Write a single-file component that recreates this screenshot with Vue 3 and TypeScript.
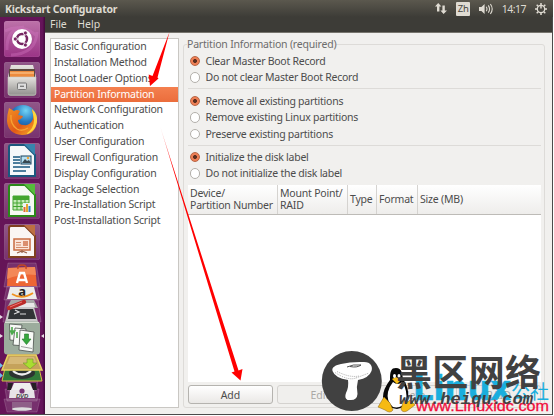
<script setup lang="ts">
interface RadioOption {
  label: string
  checked: boolean
}

const sections: string[] = [
  'Basic Configuration',
  'Installation Method',
  'Boot Loader Options',
  'Partition Information',
  'Network Configuration',
  'Authentication',
  'User Configuration',
  'Firewall Configuration',
  'Display Configuration',
  'Package Selection',
  'Pre-Installation Script',
  'Post-Installation Script',
]
const current = 'Partition Information'

const groups: RadioOption[][] = [
  [
    { label: 'Clear Master Boot Record', checked: true },
    { label: 'Do not clear Master Boot Record', checked: false },
  ],
  [
    { label: 'Remove all existing partitions', checked: true },
    { label: 'Remove existing Linux partitions', checked: false },
    { label: 'Preserve existing partitions', checked: false },
  ],
  [
    { label: 'Initialize the disk label', checked: true },
    { label: 'Do not initialize the disk label', checked: false },
  ],
]

const columns: string[] = ['Device/\nPartition Number', 'Mount Point/\nRAID', 'Type', 'Format', 'Size (MB)']
const actions: string[] = ['Add', 'Edit', 'Delete', 'RAID']
</script>

<template>
  <div class="screen">
    <header class="panel">
      <span class="title">Kickstart Configurator</span>
      <div class="tray">
        <svg class="net" width="12" height="12" viewBox="0 0 12 12">
          <path d="M3.2 0 6.4 3.6H4.4V8.6H2V3.6H0ZM8.6 11 5.4 7.4H7.4V2.4H9.8V7.4H12Z" fill="#dfdbd2" />
        </svg>
        <span class="lang">Zh</span>
        <svg class="vol" width="15" height="12" viewBox="0 0 15 12">
          <path d="M0 4H2.4L5.6 1V11L2.4 8H0Z" fill="#dfdbd2" />
          <path d="M7.2 3.8Q8.8 6 7.2 8.2M9.3 2.4Q11.8 6 9.3 9.6M11.4 1Q15 6 11.4 11" fill="none" stroke="#dfdbd2" stroke-width="1.1" />
        </svg>
        <span class="clock">14:17</span>
        <svg class="gear" width="12" height="12" viewBox="0 0 12 12">
          <circle cx="6" cy="6" r="3.7" fill="none" stroke="#dfdbd2" stroke-width="1.3" />
          <path d="M6 0V5.6M6 10V12M0 6H2M10 6H12M1.7 1.7 3.2 3.2M8.8 8.8 10.3 10.3M1.7 10.3 3.2 8.8M8.8 3.2 10.3 1.7" stroke="#dfdbd2" stroke-width="1.5" />
        </svg>
      </div>
    </header>

    <div class="desktop">
      <nav class="launcher">
        <div class="tile dash">
          <svg width="36" height="36" viewBox="0 0 36 36">
            <path d="M1 10Q17 2 32 14M3 29Q2 8 20 6M7 34Q32 33 33 11" fill="none" stroke="#d77cc6" stroke-width="3" opacity=".35" />
            <circle cx="18" cy="18" r="10" fill="#fff" />
            <circle cx="18" cy="18" r="5" fill="none" stroke="#762662" stroke-width="2.5" />
            <path d="M18 18 10 18M18 18 22 11M18 18 22 25" stroke="#fff" stroke-width="1.2" />
            <g fill="#762662" stroke="#fff" stroke-width=".7"><circle cx="11.3" cy="18" r="2" /><circle cx="21.4" cy="12" r="2" /><circle cx="21.4" cy="24" r="2" /></g>
          </svg>
        </div>
        <div class="tile">
          <svg width="36" height="36" viewBox="0 0 36 36">
            <defs>
              <linearGradient id="cab" x1="0" y1="0" x2="0" y2="1"><stop offset="0" stop-color="#e5e3df" /><stop offset="1" stop-color="#92918e" /></linearGradient>
            </defs>
            <path d="M7 3H29L32 14V31Q32 34 29 34H7Q4 34 4 31V14Z" fill="url(#cab)" />
            <path d="M5 7H31V16H5Z" fill="#5d4b40" />
            <path d="M6 9H30V15H6Z" fill="#ed8b3d" />
            <path d="M6 11H30" stroke="#ffd09b" />
            <path d="M4 15H32V31Q32 33 30 33H6Q4 33 4 31Z" fill="url(#cab)" stroke="#c9c7c3" stroke-width=".6" />
            <rect x="13.5" y="21" width="9" height="6.5" rx="1" fill="#ddd" stroke="#777" />
            <path d="M16 24.3H20" stroke="#777" stroke-width="1.3" />
          </svg>
        </div>
        <div class="tile">
          <svg width="36" height="36" viewBox="0 0 36 36">
            <defs>
              <radialGradient id="globe" cx=".6" cy=".2" r=".8"><stop offset="0" stop-color="#72d4f5" /><stop offset=".5" stop-color="#2477c0" /><stop offset="1" stop-color="#173d7d" /></radialGradient>
              <linearGradient id="fox" x1="0" y1="0" x2="1" y2="1"><stop offset="0" stop-color="#f39323" /><stop offset=".55" stop-color="#e15a17" /><stop offset="1" stop-color="#f9b629" /></linearGradient>
            </defs>
            <circle cx="19" cy="17" r="14" fill="url(#globe)" />
            <path d="M5 6 10 9Q13 7 16 9L14 13 19 14Q18 17 14 18Q14 23 20 23Q26 24 29 17Q30 11 27 7Q34 12 33 20Q31 33 18 33Q4 32 3 19Q3 13 5 6Z" fill="url(#fox)" />
            <path d="M28 7Q34 12 33 20Q31 30 22 32Q30 27 30 18Z" fill="#ffd43c" />
            <path d="M7 13Q6 22 13 27Q18 30 24 26" fill="none" stroke="#f7a132" stroke-width="1.4" />
          </svg>
        </div>
        <div class="tile">
          <svg width="36" height="36" viewBox="0 0 36 36">
            <path d="M7 2H21L31 12V33H5V4Q5 2 7 2Z" fill="#f5f8fa" stroke="#1b577e" stroke-width="2" />
            <path d="M20 1H31V12Z" fill="#3784ad" />
            <path d="M9 14H16M9 17H16M9 20H16M9 24H26M9 28H22" stroke="#16567f" stroke-width="1.6" />
            <rect x="17" y="13" width="10" height="8" fill="#b6e0f2" stroke="#17415d" />
            <path d="M18 20 21 16 23 18 25 17 27 20Z" fill="#384850" /><circle cx="24" cy="15" r="1.2" fill="#f2a438" />
          </svg>
        </div>
        <div class="tile">
          <svg width="36" height="36" viewBox="0 0 36 36">
            <path d="M7 2H21L31 12V33H5V4Q5 2 7 2Z" fill="#f6faf3" stroke="#2a8919" stroke-width="2" />
            <path d="M20 1H31V12Z" fill="#55bd3b" />
            <path d="M9 13H25V27H9Z" fill="#c4eab6" /><path d="M9 13H25V16H9Z" fill="#45a62c" />
            <path d="M9 13H25V27H9ZM9 16.5H25M9 20H25M9 23.5H25M13 13V27M17 13V27M21 13V27" fill="none" stroke="#43a530" />
            <path d="M19 20H27V29H19Z" fill="#edf5f5" /><path d="M20.5 29V24" stroke="#e36a34" stroke-width="2" /><path d="M23 29V21" stroke="#e4a72d" stroke-width="2" /><path d="M25.5 29V23" stroke="#3181c1" stroke-width="2" />
          </svg>
        </div>
        <div class="tile">
          <svg width="36" height="36" viewBox="0 0 36 36">
            <path d="M7 2H21L31 12V33H5V4Q5 2 7 2Z" fill="#faf6f3" stroke="#80401f" stroke-width="2" />
            <path d="M20 1H31V12Z" fill="#bd7042" />
            <rect x="10" y="15" width="16" height="11" fill="#fbe5d9" stroke="#c96c42" stroke-width="1.5" />
            <path d="M12 18.5H17M12 21H17M12 23.5H24" stroke="#d38a69" /><path d="M19 17H24V22H19Z" fill="#db8f6e" />
            <path d="M18 26V29M13 29 18 27 23 29" fill="none" stroke="#9c6449" stroke-width="1.3" />
          </svg>
        </div>
        <svg class="stack" width="44" height="152" viewBox="0 262 44 152">
          <g fill="#fff" fill-opacity=".12" stroke="#fff" stroke-opacity=".22" stroke-width=".7">
            <path d="M8 263H36L40 287H4Z" /><path d="M7 286H37L40 300H4Z" /><path d="M6 299H38L41 322H3Z" />
            <path d="M5 375H39L36 391H8Z" /><path d="M5 389H39L37 401H7Z" /><path d="M4 399H40L37 412H7Z" />
          </g>
          <path d="M8 268 35 267 37 286H7Z" fill="#ed6634" /><path d="M8 268 35 267 36 275Q22 273 7 279Z" fill="#f38858" />
          <path d="M18 269Q17 265 22 265T26 269" fill="none" stroke="#c44822" stroke-width="1.5" />
          <path d="M17 283 20 273H24L27 283M18 280H26" fill="none" stroke="#fff" stroke-width="2.4" />
          <path d="M10 287H34L37 299H7Z" fill="#ececea" />
          <text x="22" y="296" class="amazon">a</text>
          <path d="M12 294Q22 300 33 293" fill="none" stroke="#f1921e" stroke-width="1.8" />
          <path d="M11 300H34L38 308H7Z" fill="#a8a8a8" /><path d="M20 303H34L35 307H18Z" fill="#e8e8e8" />
          <path d="M9 307H34L38 322H5Z" fill="#c8c8c8" /><path d="M10 309H33L36 319H8Z" fill="#313436" />
          <path d="M15 310 19 312 14 314M20 314H26" fill="none" stroke="#ddd" stroke-width="1.2" />
          <path d="M9 308 24 302" stroke="#bb2c29" stroke-width="4.4" stroke-linecap="round" /><path d="M10 307 22 302" stroke="#ef7770" />
          <rect x="4" y="321.5" width="36" height="33" rx="3" fill="#9cac9d" />
          <path d="M5 322.5H39" stroke="#d7ded3" />
          <g fill="#f7f9f6" stroke="#4b514d" stroke-width=".8">
            <path d="M9.5 324 22 325 20 341 10 340Z" /><path d="M15 328 26 329 25 346 13 345Z" /><path d="M20 330 34 332 33 352 19 350Z" />
          </g>
          <path d="M12 327V331M10.500 331H14.500L12 334ZM17 332V338" stroke="#4caa4d" stroke-width="1.6" fill="#4caa4d" />
          <path d="M24.500 334H28.500V339H31L26.500 344.500 22 339H24.500Z" fill="#35a83c" stroke="#24772b" stroke-width=".6" />
          <path d="M21 346.500 32 348.500" stroke="#9ca19e" />
          <path d="M5 368H39L42 381H2Z" fill="#317a39" stroke="#d9bd44" />
          <ellipse cx="22" cy="373" rx="13" ry="6" fill="#2c3431" /><path d="M13 371Q22 378 31 371" fill="none" stroke="#eee" stroke-width="2.2" />
          <path d="M8 355H36L42 370H2Z" fill="#c5a25b" stroke="#e9d35f" stroke-width="1.5" />
          <path d="M10 357H34L37 364H7Z" fill="#d6b877" />
          <path d="M27 359H33V363H37L30 369 23 363H27Z" fill="#a9dd31" stroke="#72932a" stroke-width=".6" />
          <path d="M8 383H13L11 390H7ZM31 383H36L37 390H33Z" fill="#251f25" /><path d="M14 383H30L33 390H11Z" fill="#eee" />
          <path d="M10 390H34L35 398H9Z" fill="#e7e3e7" /><circle cx="22" cy="391" r="2.6" fill="#783273" />
          <text x="22" y="397.5" class="dvd">DVD</text>
          <path d="M12 402H32V410H12Z" fill="#a58ea1" opacity=".5" /><ellipse cx="22" cy="409" rx="10" ry="1.8" fill="#ddd" />
          <path d="M0 315 3 317 0 319ZM0 334 3 336 0 338ZM44 334 41 336 44 338Z" fill="#e7dce5" />
          <path d="M0 363 3 365.5 0 368ZM0 373 3 375.5 0 378Z" fill="#6fc0e8" />
        </svg>
      </nav>

      <main class="window">
        <div class="menubar"><span>File</span><span>Help</span></div>
        <div class="body">
          <ul class="sections">
            <li v-for="name in sections" :key="name" :class="{ selected: name === current }">{{ name }}</li>
          </ul>
          <fieldset class="frame">
            <legend>Partition Information (required)</legend>
            <div v-for="(group, i) in groups" :key="i" class="group">
              <div v-for="option in group" :key="option.label" class="option">
                <i class="radio" :class="{ on: option.checked }"></i><span>{{ option.label }}</span>
              </div>
            </div>
            <div class="table">
              <div class="thead">
                <div v-for="column in columns" :key="column" class="th">{{ column }}</div>
              </div>
            </div>
            <div class="actions">
              <button v-for="(action, i) in actions" :key="action" :disabled="i > 0">{{ action }}</button>
            </div>
          </fieldset>
        </div>
      </main>
    </div>

    <svg class="overlay" width="554" height="416" viewBox="0 0 554 416">
      <defs>
        <linearGradient id="tail" gradientUnits="userSpaceOnUse" x1="160" y1="126" x2="175" y2="165"><stop offset="0" stop-color="#f00" stop-opacity=".15" /><stop offset="1" stop-color="#f00" /></linearGradient>
      </defs>
      <path d="M169.5 32 157.5 77.5 158.5 78.5 150 86 148.7 74.500 152.500 76Z" fill="#fe0000" />
      <path d="M160 126 238.500 370.500 242.500 369 240.500 380.500 231.500 372.500 234.500 371.500Z" fill="url(#tail)" />

      <g class="mark">
        <text x="413" y="399.500" class="linux" textLength="98" lengthAdjust="spacingAndGlyphs">Linux</text>
        <text x="511" y="399" class="club" textLength="38">公社</text>
        <text x="416" y="411" class="site" textLength="133" lengthAdjust="spacingAndGlyphs">www.Linuxidc.com</text>
      </g>
      <g>
        <path d="M390 380C390 371 391 368 396 368C402 368 402 373 403 379Q409 387 408 397Q407 407 397 409Q385 408 383 397Q383 389 390 380Z" fill="#080808" />
        <path d="M393 382Q398 386 402 382Q408 391 406 401Q402 409 393 407Q386 401 388 392Q389 387 393 382Z" fill="#fff" />
        <path d="M392 379 396 377 401 380 397 384Z" fill="#f7bd13" />
        <ellipse cx="394.5" cy="376" rx="1.5" ry="2" fill="#fff" /><ellipse cx="399" cy="376" rx="1.5" ry="2" fill="#fff" />
        <path d="M384 397 390 403 393 410Q390 414 385 410L378 407 381 402Z" fill="#f6ba13" stroke="#866014" stroke-width=".5" />
        <path d="M404 399Q407 404 410 400L415 405 407 411Q402 413 401 409Z" fill="#f6ba13" stroke="#866014" stroke-width=".5" />
      </g>
      <circle cx="351.800" cy="381" r="30" fill="#414141" />
      <path d="M332.500 371C331.500 367 336 365 341 364Q351 361.500 364 362C371 362 373 367 371.500 371Q369 378 358 380Q356 387 357.500 394Q357 400 351 400H347.500Q344 398 346 393Q349 387 348 380Q335 378 332.500 371Z" fill="#fff" />
      <path d="M347 367Q353 364 361 365Q357 368 350 366.500" fill="none" stroke="#414141" stroke-width=".9" />
      <path d="M335 372.500Q348 381 356 378M337 371.500Q350 378 359 376M356 378 369 373" fill="none" stroke="#777" stroke-width=".6" stroke-dasharray="1 1" />
      <text x="396" y="386" class="heiqu" textLength="145">黑区网络</text>
      <text x="399" y="404" class="url" textLength="134" lengthAdjust="spacingAndGlyphs">www.heiqu.com</text>
    </svg>
  </div>
</template>

<style>
body {
  background: #fff;
}
</style>

<style scoped>
* {
  box-sizing: border-box;
}
.screen {
  position: relative;
  width: 554px;
  height: 416px;
  padding: 0 1px 1px 0;
  overflow: hidden;
  font: 10.5px/16px 'Noto Sans', 'Open Sans', sans-serif;
  letter-spacing: -0.2px;
  color: #4c4c4c;
}
.panel {
  height: 17px;
  display: flex;
  align-items: center;
  justify-content: space-between;
  padding: 0 6px 0 5px;
  background: linear-gradient(#5b584e, #3d3c37);
  color: #dfdbd2;
}
.title {
  font-weight: 700;
  letter-spacing: -0.24px;
}
.tray {
  display: flex;
  align-items: center;
}
.lang {
  width: 14px;
  height: 14px;
  margin-left: 9px;
  border-radius: 1px;
  background: #dfdbd2;
  color: #45443e;
  font-size: 9.5px;
  line-height: 14px;
  text-align: center;
}
.vol {
  margin-left: 8.5px;
}
.clock {
  margin: 0 9px 0 8px;
  letter-spacing: -0.5px;
}
.desktop {
  display: flex;
  height: 398px;
  border-right: 1px solid #4b4b4b;
  border-bottom: 1px solid #4b4b4b;
}
.launcher {
  width: 45px;
  flex: none;
  display: flex;
  flex-direction: column;
  align-items: center;
  gap: 4.6px;
  padding: 4px 1px 0 0;
  background: linear-gradient(90deg, #651457, #65145a 94%, #42083a);
}
.tile {
  width: 36px;
  height: 36px;
  flex: none;
  border-radius: 3px;
  background: linear-gradient(#ffffff48, #ffffff20);
  box-shadow: inset 0 0 1px #ffffff70;
}
.tile svg {
  display: block;
}
.dash {
  background: linear-gradient(#bc72a9, #9b3486);
}
.stack {
  flex: none;
  margin-top: -3px;
}
.amazon {
  font: 700 13px 'Noto Sans', sans-serif;
  text-anchor: middle;
  fill: #242424;
}
.dvd {
  font: italic 700 6px 'Liberation Sans', sans-serif;
  text-anchor: middle;
  fill: #444;
}
.window {
  flex: 1;
  min-width: 0;
  display: flex;
  flex-direction: column;
  background: #f1f0ee;
}
.menubar {
  height: 16px;
  flex: none;
  display: flex;
  gap: 10.5px;
  padding-left: 5px;
  background: #3d3c37;
  border-bottom: 1px solid #77756e;
  color: #dfdbd2;
  line-height: 15px;
  letter-spacing: 0;
}
.body {
  flex: 1;
  min-height: 0;
  display: flex;
  gap: 4px;
  padding: 5px 7px 6px 5px;
}
.sections {
  width: 129px;
  flex: none;
  margin: 0;
  padding: 0;
  list-style: none;
  background: #fff;
  border: 1px solid #c9c7c3;
}
.sections li {
  height: 15.85px;
  padding-left: 3px;
  line-height: 15.5px;
  white-space: nowrap;
}
.sections .selected {
  background: linear-gradient(#f4804f, #eb6d3c);
  color: #fff;
}
.frame {
  flex: 1;
  min-width: 0;
  display: flex;
  flex-direction: column;
  margin: 0;
  padding: 0 3px 3px 4px;
  border: 1px solid #dddbd8;
  border-radius: 3px;
}
legend {
  margin-left: -1px;
  padding: 0;
  height: 13px;
  line-height: 13px;
  color: #6c6c6c;
}
.group {
  padding: 1.5px 0 2px;
  border-bottom: 1px solid #dddbd8;
}
.group + .group {
  padding: 4px 0 2.5px;
}
.group + .group + .group {
  border-bottom: 0;
  padding: 3px 0;
}
.option {
  display: flex;
  align-items: center;
  gap: 5.5px;
  height: 16.5px;
  padding-left: 1.5px;
  letter-spacing: -0.25px;
  white-space: nowrap;
}
.radio {
  width: 10.5px;
  height: 10.5px;
  flex: none;
  border: 1px solid #b3b0ab;
  border-radius: 50%;
  background: #fff;
}
.radio.on {
  border-color: #b86442;
  background: radial-gradient(circle, #5b2f20 0 1.6px, #ed7f55 2.3px);
}
.table {
  flex: 1;
  background: #fff;
}
.thead {
  height: 30px;
  display: grid;
  grid-template-columns: 90px 70px 29px 41px 1fr;
  align-items: stretch;
  background: linear-gradient(#fff, #eeedeb);
  border-bottom: 1px solid #bdbbb7;
}
.th {
  display: flex;
  align-items: center;
  padding-left: 2px;
  border-right: 1px solid #d5d3d0;
  line-height: 12px;
  white-space: pre;
}
.th:last-child {
  border-right: 0;
}
.actions {
  display: grid;
  grid-template-columns: repeat(4, 1fr);
  gap: 4.5px;
  margin-top: 3px;
}
button {
  height: 19px;
  padding: 0;
  border: 1px solid #b5b3af;
  border-radius: 3px;
  background: linear-gradient(#fff, #eae8e6);
  color: #4c4c4c;
  font: inherit;
  line-height: 16px;
}
button:disabled {
  border-color: #d4d2cf;
  background: #f0efed;
  color: #aaa8a5;
}
.overlay {
  position: absolute;
  inset: 0;
  letter-spacing: 0;
}
.linux {
  font: 700 33px 'DejaVu Sans', sans-serif;
  fill: #1aaede;
  stroke: #1aaede;
  stroke-width: 0.6px;
}
.club {
  font: 19px 'Noto Sans CJK SC', sans-serif;
  fill: #1aaede;
}
.site {
  font: 15px 'Liberation Sans', sans-serif;
  fill: #f00d3c;
  stroke: #f00d3c;
  stroke-width: 0.3px;
}
.heiqu {
  font: 700 36px 'Noto Sans CJK SC', sans-serif;
  fill: #414141;
}
.url {
  font: italic 700 16px 'Liberation Mono', monospace;
  fill: #414141;
}
</style>
